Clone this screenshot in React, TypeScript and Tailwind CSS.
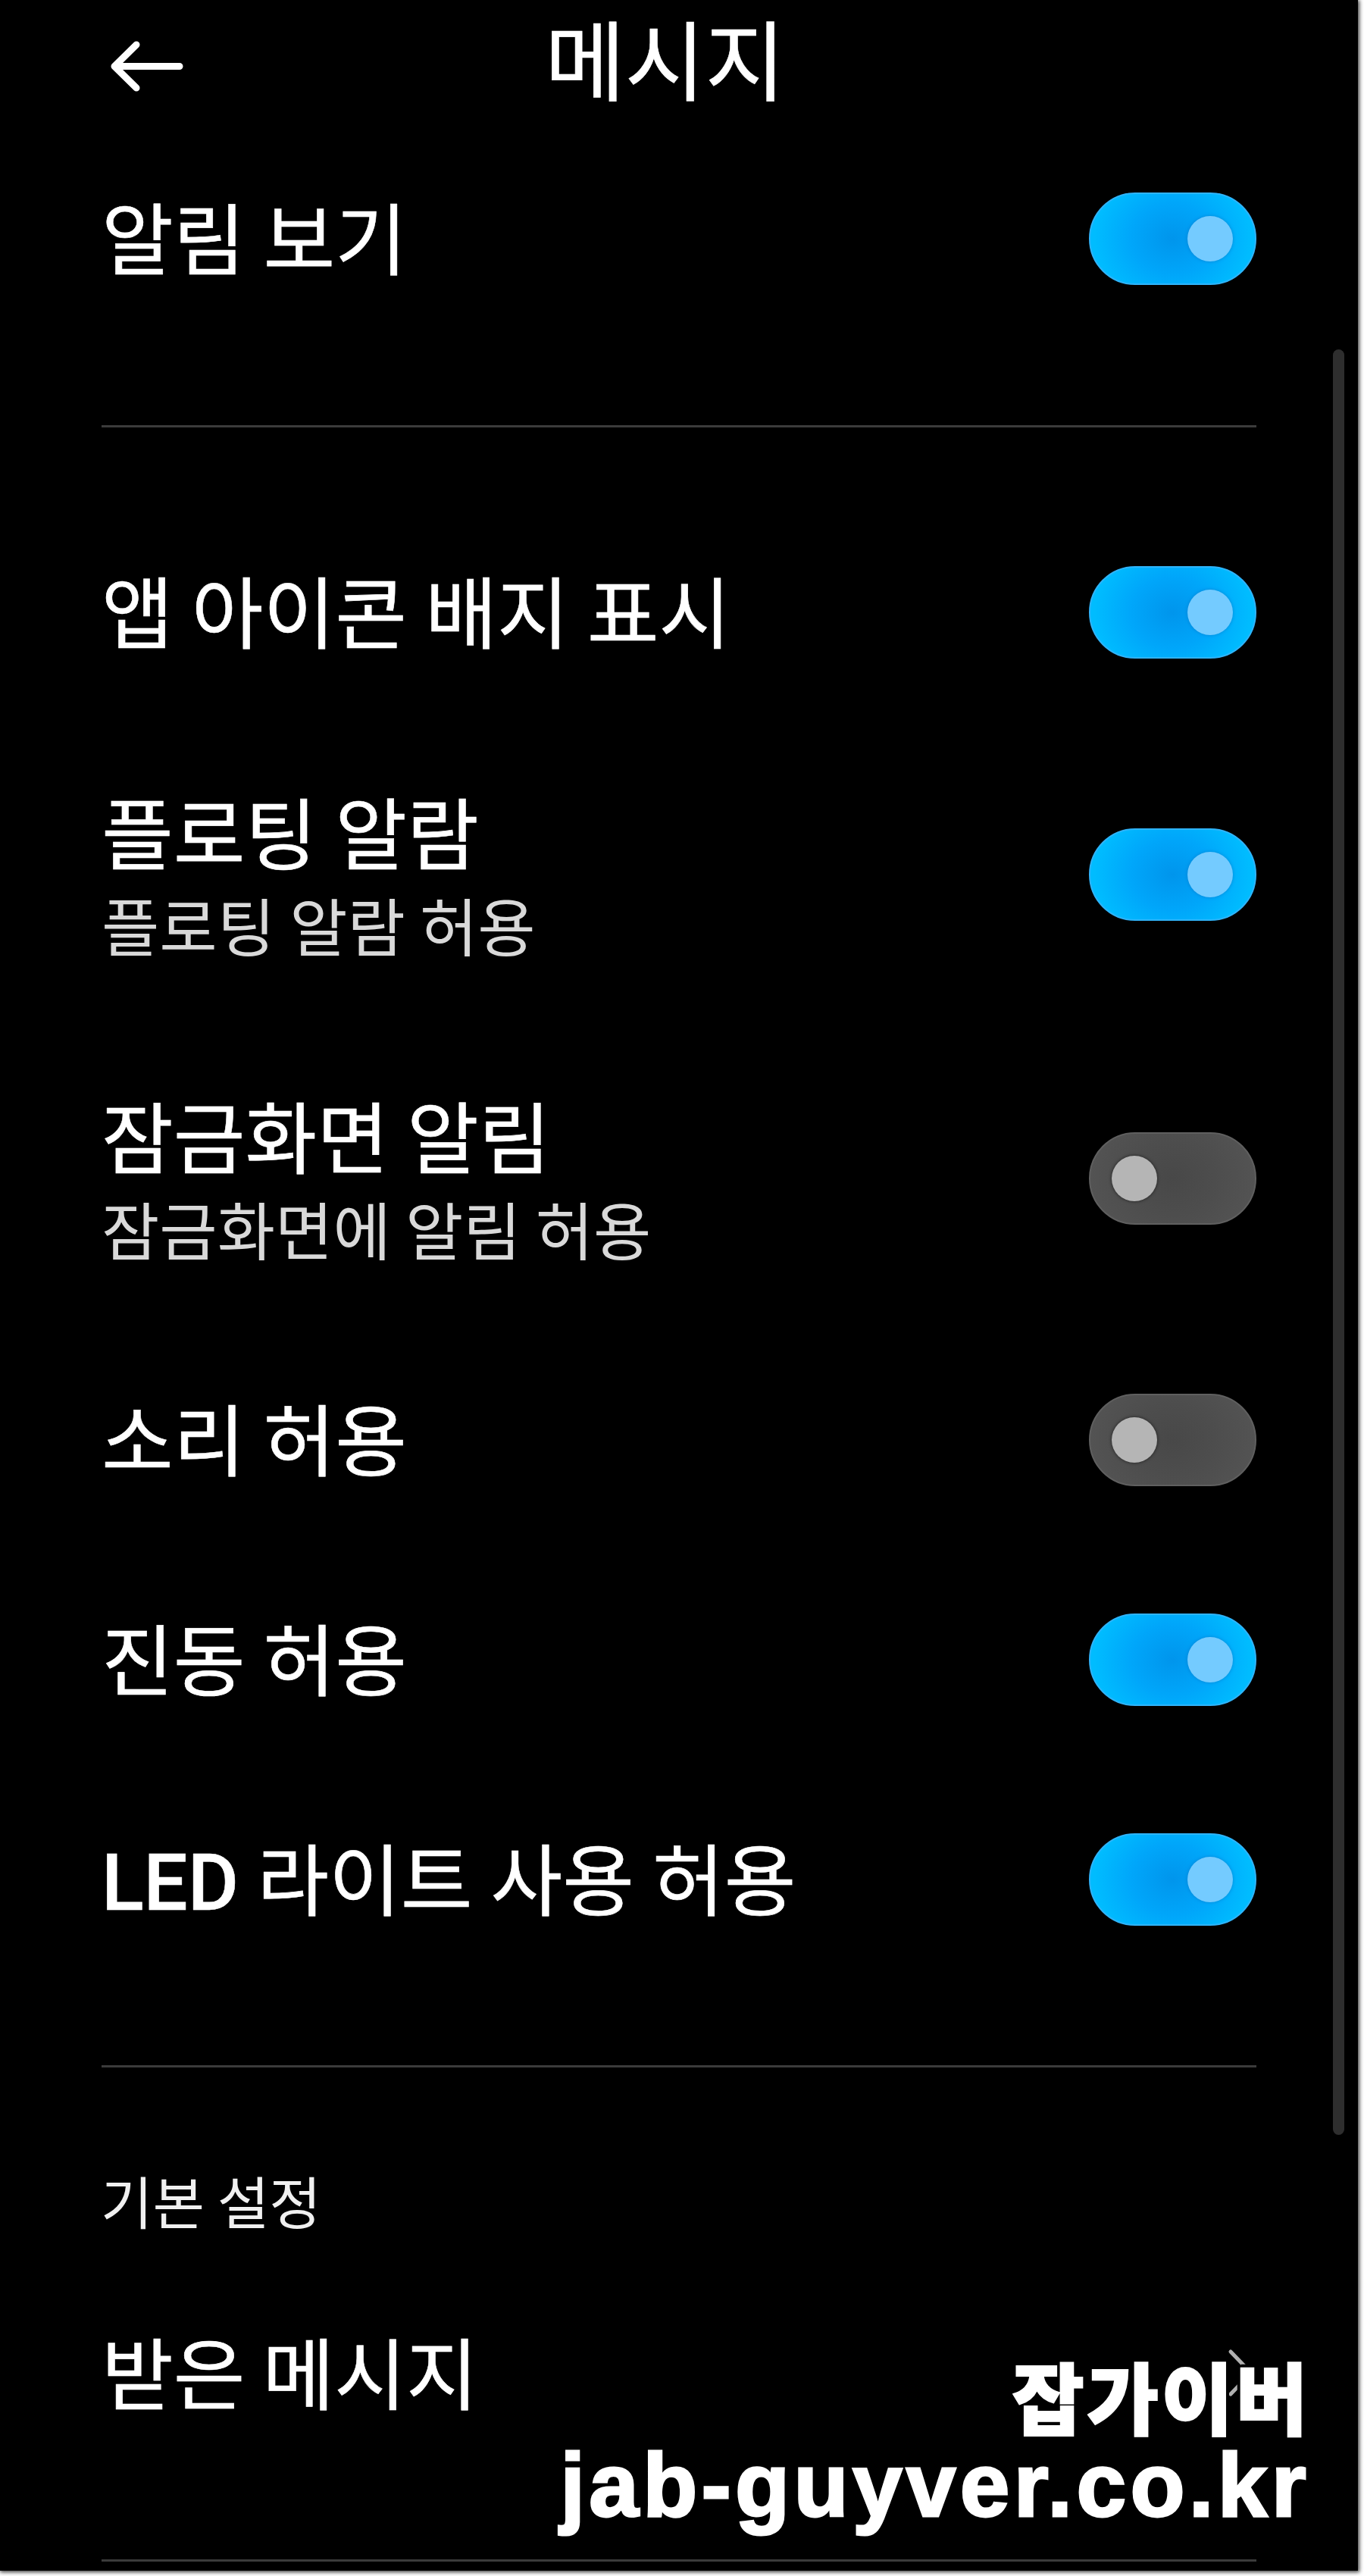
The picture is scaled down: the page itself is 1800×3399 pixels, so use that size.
import React from "react";

function Switch({ on }: { on: boolean }) {
  return (
    <div
      className={
        on
          ? "flex h-[122px] w-[221px] shrink-0 items-center justify-end rounded-full border-2 border-[#2fb4fb] bg-[radial-gradient(ellipse_50%_80%_at_center,#0095ec_0%,#00a6fa_50%,#00bcff_95%)] px-[29px]"
          : "flex h-[122px] w-[221px] shrink-0 items-center justify-start rounded-full border-2 border-[#5f5f5f] bg-[radial-gradient(ellipse_50%_80%_at_center,#484848_0%,#4d4d4d_50%,#535353_100%)] px-[28px]"
      }
    >
      <div
        className={
          on
            ? "size-[60px] rounded-full bg-[#74cbff] shadow-[0_0_4px_rgba(0,110,190,0.6)]"
            : "size-[60px] rounded-full bg-[#b5b5b5] shadow-[0_0_4px_rgba(0,0,0,0.6)]"
        }
      />
    </div>
  );
}

function Row({ title, sub, on, className }: { title: React.ReactNode; sub?: string; on: boolean; className: string }) {
  return (
    <div className={`flex items-center justify-between ${className}`}>
      <div className={sub ? "pb-[15px]" : "pb-[8px]"}>
        <div className="text-[103px] leading-[150px] [-webkit-text-stroke:0.6px_white] [word-spacing:1px]">{title}</div>
        {sub && <div className="-mt-[5px] text-[83px] leading-[106px] text-[#d9d9d9] [word-spacing:0.5px]">{sub}</div>}
      </div>
      <Switch on={on} />
    </div>
  );
}

export default function App() {
  return (
    <div className="relative h-[3399px] w-[1800px] overflow-hidden bg-white font-['Noto_Sans_CJK_KR',sans-serif] text-white">
      <div className="relative h-[3392px] w-[1792px] whitespace-nowrap bg-black px-[134px] shadow-[1px_1px_5px_1px_rgba(0,0,0,0.75)]">
        <header className="flex h-[170px] items-center">
          <svg className="ml-[8px] h-[80px] w-[110px]" viewBox="0 0 110 80" fill="none" stroke="white" strokeWidth="9" strokeLinecap="round" strokeLinejoin="round">
            <path d="M95 42.500H9M38 14L9 42.500L38 71" />
          </svg>
          <h1 className="ml-[467px] pb-[22px] text-[115px] leading-[148px] [-webkit-text-stroke:0.6px_white]">메시지</h1>
        </header>
        <Row className="mt-[70px] h-[150px]" title="알림 보기" on />
        <div className="mt-[171px] h-[3px] bg-[#3b3b3b]" />
        <Row className="mt-[169px] h-[150px]" title="앱 아이콘 배지 표시" on />
        <Row className="mt-[143px] h-[256px]" title="플로팅 알람" sub="플로팅 알람 허용" on />
        <Row className="mt-[145px] h-[256px]" title="잠금화면 알림" sub="잠금화면에 알림 허용" on={false} />
        <Row className="mt-[142px] h-[150px]" title="소리 허용" on={false} />
        <Row className="mt-[140px] h-[150px]" title="진동 허용" on />
        <Row
          className="mt-[140px] h-[150px]"
          title={
            <>
              <span className="font-['Roboto'] leading-[0] font-medium">LED</span> 라이트 사용 허용
            </>
          }
          on
        />
        <div className="mt-[170px] h-[3px] bg-[#3b3b3b]" />
        <div className="mt-[120px] -ml-px text-[74.500px] leading-[110px] text-[#f0f0f0]">기본 설정</div>
        <div className="mt-[98px] flex h-[150px] items-center justify-between">
          <div className="pb-[6px] text-[103px] leading-[150px] [-webkit-text-stroke:0.6px_white]">받은 메시지</div>
          <svg className="mr-[2px] h-[70px] w-[36px]" viewBox="0 0 36 70" fill="none" stroke="#b0b0b0" strokeWidth="5" strokeLinecap="round">
            <path d="M4 7L31 35L4 63" />
          </svg>
        </div>
        <div className="mt-[171px] h-[3px] bg-[#3b3b3b]" />
        <div className="absolute top-[461px] right-[18px] h-[2356px] w-[15px] rounded-full bg-[#2e2e2e]" />
        <div className="absolute top-[3091px] right-[63px] flex flex-col items-end font-black [text-shadow:5px_0_0_#000,-5px_0_0_#000,0_5px_0_#000,0_-5px_0_#000,4px_4px_0_#000,-4px_-4px_0_#000,4px_-4px_0_#000,-4px_4px_0_#000]">
          <div className="text-[103px] leading-[140px] tracking-[3.500px] [-webkit-text-stroke:2px_white]">잡가이버</div>
          <div className="-mt-[7px] font-['Liberation_Sans'] text-[118px] leading-[110px] font-bold tracking-[5.300px] [-webkit-text-stroke:3px_white]">jab-guyver.co.kr</div>
        </div>
      </div>
    </div>
  );
}
